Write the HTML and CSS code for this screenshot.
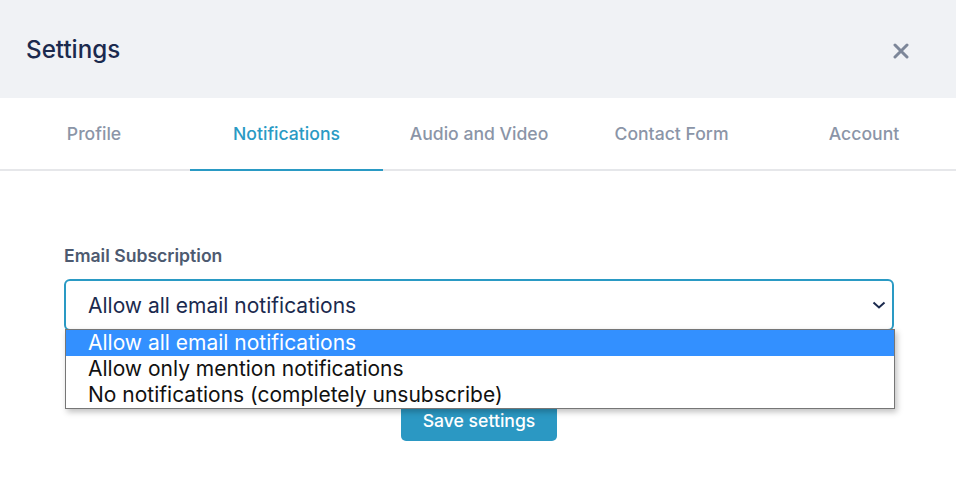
FILE: index.html
```html
<!DOCTYPE html>
<html lang="en">
<head>
<meta charset="utf-8">
<title>Settings</title>
<link rel="stylesheet" href="styles.css">
</head>
<body>
<div class="modal">
  <header class="modal-header">
    <h1 class="modal-title">Settings</h1>
    <button class="close-btn" aria-label="Close">
      <svg width="16" height="16" viewBox="0 0 16 16"><path d="M2 2 L14 14 M14 2 L2 14" stroke="#7d8799" stroke-width="3" stroke-linecap="round"/></svg>
    </button>
  </header>
  <nav class="tabs">
    <div class="tab">Profile</div>
    <div class="tab active">Notifications</div>
    <div class="tab">Audio and Video</div>
    <div class="tab">Contact Form</div>
    <div class="tab">Account</div>
  </nav>
  <section class="body">
    <label class="field-label">Email Subscription</label>
    <div class="select-wrap">
      <div class="select">
        <span>Allow all email notifications</span>
        <svg class="chevron" width="14" height="8" viewBox="0 0 14 8"><path d="M1.5 1.5 L7 6.5 L12.5 1.5" fill="none" stroke="#1b2a4e" stroke-width="2"/></svg>
      </div>
      <ul class="dropdown">
        <li class="option selected">Allow all email notifications</li>
        <li class="option">Allow only mention notifications</li>
        <li class="option">No notifications (completely unsubscribe)</li>
      </ul>
    </div>
    <div class="actions">
      <button class="save-btn">Save settings</button>
    </div>
  </section>
</div>
</body>
</html>
```
FILE: styles.css
```css
* { box-sizing: border-box; }
html, body { margin: 0; padding: 0; background: #fff; overflow: hidden; }
body { font-family: Inter, "Noto Sans", sans-serif; }
.modal { width: 956px; height: 501px; overflow: hidden; }
.modal-header {
  height: 98px;
  background: #f0f2f5;
  display: flex;
  align-items: center;
  justify-content: space-between;
  padding: 0 47px 0 26px;
}
.modal-title { margin: 0; font-size: 24.2px; font-weight: 500; color: #1b2a4e; }
.close-btn { border: 0; background: none; padding: 0; display: flex; cursor: pointer; margin-top: 4px; }
.tabs {
  display: flex;
  margin-left: -2.25px;
  width: calc(100% + 6.5px);
  border-bottom: 2px solid #e6e7ea;
  height: 73px;
}
.tab {
  flex: 1 1 0;
  display: flex;
  align-items: center;
  justify-content: center;
  font-size: 17.6px;
  font-weight: 500;
  color: #8b95a7;
  margin-bottom: -2px;
  border-bottom: 2px solid transparent;
}
.tab.active { color: #2a9ac4; border-bottom-color: #2a9ac4; }
.body { padding: 75px 62px 0 64px; }
.field-label { display: block; font-size: 17.6px; font-weight: 600; color: #4d5a70; margin-bottom: 13px; line-height: 20px; }
.select-wrap { position: relative; }
.select {
  height: 52px;
  border: 2px solid #2a9ac4;
  border-radius: 6px;
  display: flex;
  align-items: center;
  justify-content: space-between;
  padding: 0 6px 0 22px;
  font-size: 21px;
  color: #1b2a4e;
}
.dropdown {
  position: absolute;
  left: 1px;
  right: -1px;
  top: 50px;
  margin: 0;
  padding: 0;
  list-style: none;
  background: #fff;
  border: 1px solid #767676;
  box-shadow: 2px 3px 6px rgba(0,0,0,0.25);
  z-index: 2;
}
.option { height: 26px; line-height: 26px; padding-left: 22px; font-size: 21px; color: #111; }
.option.selected { background: #3390ff; color: #fff; }
.actions { display: flex; justify-content: center; padding-top: 68px; }
.save-btn {
  border: 0;
  background: #2b98c3;
  color: #fff;
  font-family: inherit;
  font-size: 17.6px;
  font-weight: 500;
  width: 156px;
  height: 42px;
  border-radius: 5px;
}
```
